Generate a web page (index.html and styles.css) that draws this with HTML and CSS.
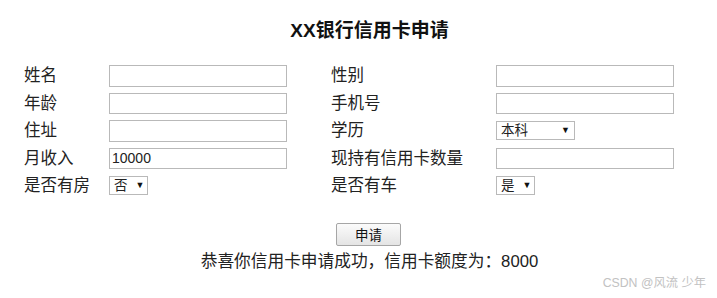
FILE: index.html
```html
<!DOCTYPE html>
<html lang="zh">
<head>
<meta charset="utf-8">
<title>XX银行信用卡申请</title>
<link rel="stylesheet" href="styles.css">
</head>
<body>
<div class="page">
  <h1 class="title">XX银行信用卡申请</h1>
  <div class="form">
    <span class="label">姓名</span>
    <input class="field" type="text">
    <span class="label">性别</span>
    <input class="field" type="text">

    <span class="label">年龄</span>
    <input class="field" type="text">
    <span class="label">手机号</span>
    <input class="field" type="text">

    <span class="label">住址</span>
    <input class="field" type="text">
    <span class="label">学历</span>
    <span class="select select-wide"><span class="sel-text">本科</span><span class="arrow">▼</span></span>

    <span class="label">月收入</span>
    <input class="field" type="text" value="10000">
    <span class="label">现持有信用卡数量</span>
    <input class="field" type="text">

    <span class="label">是否有房</span>
    <span class="select"><span class="sel-text">否</span><span class="arrow">▼</span></span>
    <span class="label">是否有车</span>
    <span class="select"><span class="sel-text">是</span><span class="arrow">▼</span></span>
  </div>
  <div class="actions">
    <button class="btn" type="button">申请</button>
  </div>
  <p class="result">恭喜你信用卡申请成功，信用卡额度为：8000</p>
</div>
<div class="watermark">CSDN @风流 少年</div>
</body>
</html>
```

FILE: styles.css
```css
html, body {
  margin: 0;
  padding: 0;
  background: #ffffff;
}
body {
  font-family: "Liberation Sans", Arial, "Noto Sans CJK SC", sans-serif;
  color: #222222;
  width: 717px;
  height: 298px;
  overflow: hidden;
  position: relative;
}
.page {
  padding-top: 18px;
}
.title {
  margin: 0;
  font-size: 19px;
  font-weight: bold;
  line-height: 26px;
  text-align: center;
  padding-left: 22px;
  color: #111111;
}
.form {
  margin-top: 21px;
  margin-left: 24px;
  display: grid;
  grid-template-columns: 85px 178px 44px 165px 178px;
  row-gap: 6px;
  align-items: center;
}
.form > :nth-child(4n+3) {
  grid-column: 4;
}
.label {
  font-size: 16.5px;
  line-height: 21.5px;
  color: #222222;
  white-space: nowrap;
}
.field {
  box-sizing: border-box;
  width: 178px;
  height: 21.5px;
  margin: 0;
  border: 1px solid #b9b9b9;
  padding: 0 2px;
  font-family: "Liberation Sans", Arial, sans-serif;
  font-size: 14px;
  color: #222222;
  background: #ffffff;
  outline: none;
}
.select {
  box-sizing: border-box;
  height: 19px;
  border: 1px solid #b9b9b9;
  display: inline-flex;
  align-items: center;
  justify-self: start;
  padding: 0 4px;
  gap: 8px;
  background: #ffffff;
  font-family: "Liberation Sans", Arial, "Noto Sans CJK SC", sans-serif;
  font-size: 13.5px;
  color: #222222;
  width: 39px;
}
.select-wide {
  width: 79px;
  justify-content: space-between;
}
.sel-text {
  line-height: 17px;
}
.arrow {
  font-size: 9px;
  line-height: 17px;
  color: #111111;
}
.actions {
  margin-top: 26px;
  display: flex;
  justify-content: center;
  padding-left: 20px;
}
.btn {
  box-sizing: border-box;
  width: 65px;
  height: 23px;
  border: 1px solid #a6a6a6;
  border-radius: 2px;
  background: linear-gradient(#fbfbfb, #e4e4e4);
  font-family: "Liberation Sans", Arial, "Noto Sans CJK SC", sans-serif;
  font-size: 13.5px;
  color: #111111;
  padding: 0;
}
.result {
  margin: 5px 0 0 0;
  text-align: center;
  padding-left: 22px;
  font-size: 16.7px;
  line-height: 22px;
  color: #222222;
}
.watermark {
  position: absolute;
  right: 11px;
  bottom: 7px;
  font-size: 12.3px;
  color: #c2c2c2;
  font-family: "Liberation Sans", Arial, "Noto Sans CJK SC", sans-serif;
}
```
